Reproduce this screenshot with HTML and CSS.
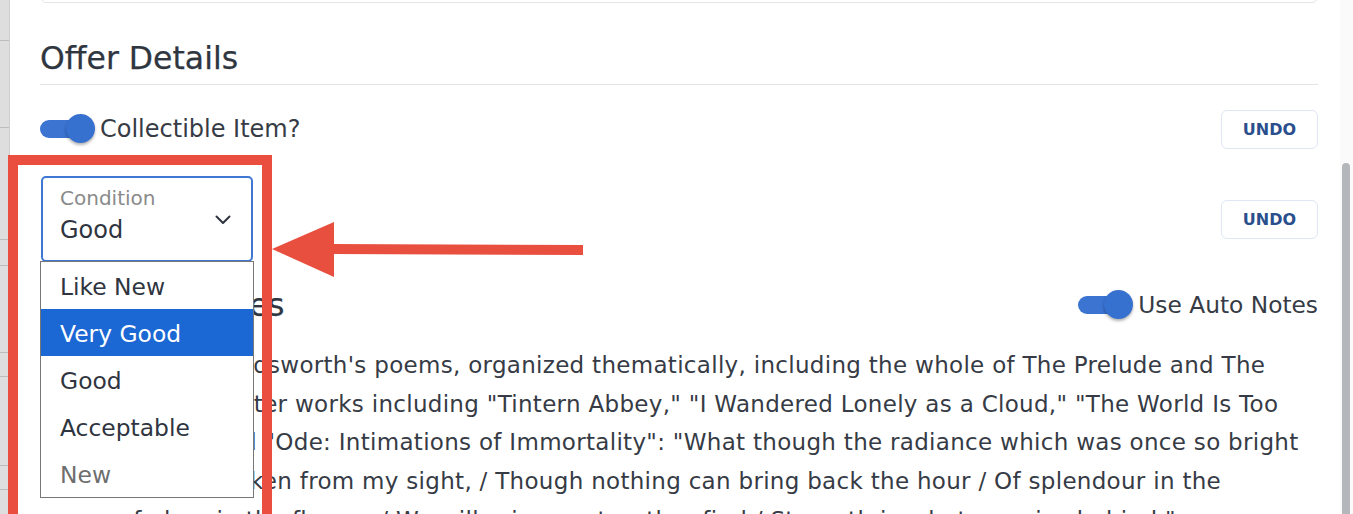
FILE: index.html
```html
<!DOCTYPE html>
<html lang="en">
<head>
<meta charset="utf-8">
<title>Offer Details</title>
<link rel="stylesheet" href="styles.css">
</head>
<body>
<div class="app">
  <aside class="side-strip">
    <div class="strip-line l1"></div>
    <div class="strip-line l2"></div>
    <div class="strip-line l3"></div>
    <div class="strip-line l4"></div>
    <div class="strip-line l5"></div>
    <div class="strip-line l6"></div>
    <div class="strip-line l7"></div>
    <div class="strip-line l8"></div>
  </aside>

  <main class="content">
    <div class="prev-card"></div>

    <h2 class="section-title">Offer Details</h2>
    <div class="divider"></div>

    <div class="row row-collectible">
      <label class="toggle-label">
        <span class="toggle"><span class="track"></span><span class="knob"></span></span>
        <span class="label-text collectible-text">Collectible Item?</span>
      </label>
      <button class="undo">UNDO</button>
    </div>

    <div class="row row-condition">
      <div class="select-wrap">
        <div class="select">
          <div class="select-text">
            <span class="select-label">Condition</span>
            <span class="select-value">Good</span>
          </div>
          <svg class="chevron" width="16" height="10" viewBox="0 0 16 10"><path d="M1.5 1.5 L8 8 L14.5 1.5" fill="none" stroke="#2f3540" stroke-width="2" stroke-linecap="round" stroke-linejoin="round"/></svg>
        </div>
        <ul class="options">
          <li class="opt">Like New</li>
          <li class="opt selected">Very Good</li>
          <li class="opt">Good</li>
          <li class="opt">Acceptable</li>
          <li class="opt muted">New</li>
        </ul>
      </div>
      <button class="undo">UNDO</button>
    </div>

    <div class="row row-notes">
      <h2 class="section-title notes-title">Condition Notes</h2>
      <label class="toggle-label">
        <span class="toggle"><span class="track"></span><span class="knob"></span></span>
        <span class="label-text auto-text">Use Auto Notes</span>
      </label>
    </div>

    <p class="notes">A selection of Wordsworth's poems, organized thematically, including the whole of The Prelude and The<br>Recluse, plus shorter works including "Tintern Abbey," "I Wandered Lonely as a Cloud," "The World Is Too<br>Much with Us, and "Ode: Intimations of Immortality": "What though the radiance which was once so bright<br>Be now forever taken from my sight, / Though nothing can bring back the hour / Of splendour in the<br>grass, of glory in the flower; / We will grieve not, rather find / Strength in what remains behind."</p>

    <div class="annotation-box"></div>
    <svg class="annotation-arrow" width="320" height="60" viewBox="0 0 320 60">
      <polygon points="2,29 64,2 64,57" fill="#e94f3f"/>
      <polygon points="60,24 313,25 313,35 60,34" fill="#e94f3f"/>
    </svg>
  </main>

  <div class="scrollbar"><div class="thumb"></div></div>
</div>
</body>
</html>
```

FILE: styles.css
```css
* { box-sizing: border-box; }
html, body { margin: 0; padding: 0; height: 100%; }
body {
  background: #ffffff;
  font-family: "DejaVu Sans", "Open Sans", sans-serif;
  color: #363b45;
  overflow: hidden;
}
.app {
  display: flex;
  height: 514px;
  overflow: hidden;
}
.side-strip {
  width: 10px;
  flex: none;
  background: #dedede;
  border-right: 1px solid #cfcfcf;
  display: flex;
  flex-direction: column;
}
.strip-line { height: 1px; background: #bdbdbd; }
.l1 { margin-top: 40px; }
.l2 { margin-top: 86px; }
.l3 { margin-top: 111px; }
.l4 { margin-top: 25px; }
.l5 { margin-top: 86px; }
.l6 { margin-top: 23px; }
.l7 { margin-top: 88px; }
.l8 { margin-top: 23px; }

.content {
  flex: 1;
  position: relative;
  padding: 0 22px 0 30px;
}
.prev-card {
  height: 12px;
  margin-top: -9px;
  border: 1px solid #e3e5e8;
  border-radius: 8px;
}
.section-title {
  margin: 0;
  font-size: 31.5px;
  font-weight: normal;
  line-height: 40px;
  color: #30363f;
  padding-top: 35px;
  -webkit-text-stroke: 0.25px #30363f;
}
.divider {
  height: 1px;
  background: #e3e3e3;
  margin-top: 6px;
}
.row {
  display: flex;
  align-items: center;
  justify-content: space-between;
}
.row-collectible { margin-top: 24px; height: 40px; }
.row-condition { margin-top: 27px; height: 86px; }
.row-notes { margin-top: 21px; height: 44px; }
.row-notes .section-title { padding-top: 0; letter-spacing: -0.5px; }

.toggle-label { display: flex; align-items: center; gap: 4px; }
.label-text { font-size: 22px; line-height: 30px; color: #363b45; }
.collectible-text { font-size: 24px; }
.auto-text { font-size: 23.3px; }
.toggle {
  position: relative;
  width: 56px;
  height: 30px;
  display: block;
}
.track {
  position: absolute;
  left: 0; top: 6px;
  width: 52px; height: 18px;
  border-radius: 9px;
  background: #3b74d1;
}
.knob {
  position: absolute;
  left: 26px; top: 0;
  width: 29px; height: 29px;
  border-radius: 50%;
  background: #3671cf;
  box-shadow: 0 2px 3px rgba(0,0,0,0.3);
}

.undo {
  width: 97px;
  height: 39px;
  border: 1px solid #dfe7f4;
  border-radius: 6px;
  background: #ffffff;
  font-family: "DejaVu Sans", sans-serif;
  font-weight: bold;
  font-size: 16px;
  color: #2b4f8d;
  padding: 0;
}

.select-wrap {
  position: relative;
  width: 212px;
  margin-left: 1px;
}
.select {
  height: 86px;
  border: 2px solid #3f78d2;
  border-radius: 5px;
  display: flex;
  align-items: flex-start;
  justify-content: space-between;
  padding: 7px 20px 0 17px;
}
.select-text { display: flex; flex-direction: column; }
.select-label { font-size: 20px; line-height: 26px; color: #8a8a8a; }
.select-value { font-size: 24px; line-height: 38px; color: #2f3540; }
.chevron { margin-top: 30px; }

.options {
  position: absolute;
  left: -1px;
  top: 85px;
  width: 214px;
  margin: 0;
  padding: 0;
  list-style: none;
  background: #ffffff;
  border: 1px solid #777777;
  z-index: 2;
}
.opt {
  height: 47px;
  line-height: 43px;
  padding: 4px 0 0 19px;
  font-size: 23.4px;
  color: #2f3540;
}
.opt.selected { background: #1b67d3; color: #ffffff; }
.opt.muted { color: #6e6e6e; }

.notes {
  margin: 19px 0 0;
  font-size: 23px;
  letter-spacing: 0.3px;
  line-height: 38.7px;
  color: #363b45;
  white-space: nowrap;
}

.annotation-box {
  position: absolute;
  left: -2px;
  top: 155px;
  width: 264px;
  height: 370px;
  border: 10px solid #e94e3f;
  z-index: 3;
}
.annotation-arrow {
  position: absolute;
  left: 260px;
  top: 220px;
  z-index: 3;
}

.scrollbar {
  width: 13px;
  flex: none;
  background: #fafafa;
  padding: 163px 3px 0 2px;
}
.thumb {
  height: 400px;
  background: #b3b7bb;
  border-radius: 4px;
}
```
